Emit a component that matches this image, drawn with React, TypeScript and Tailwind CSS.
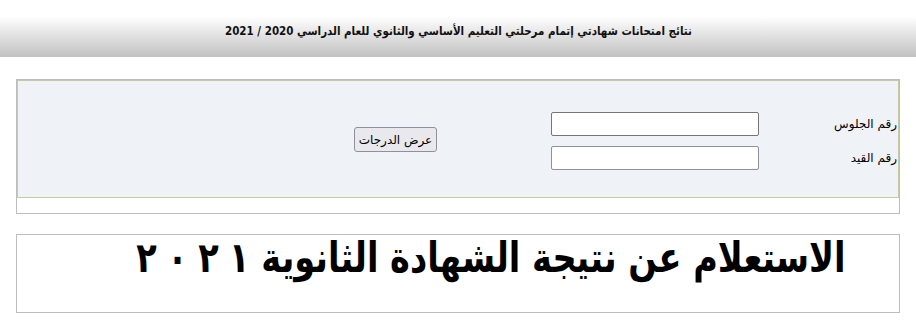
import React from "react"

const yearDigits = ["٢", "٠", "٢", "١"]

export default function App() {
  return (
    <div dir="rtl" className="min-h-[334px] w-[916px] bg-white font-['DejaVu_Sans',sans-serif] text-black">
      <header className="flex h-[57px] items-start justify-center bg-[linear-gradient(to_bottom,#ffffff_28%,#c1c1c1)] pt-[22px]">
        <h1 className="inline-block origin-center scale-x-[0.86] whitespace-nowrap text-[12px] font-bold leading-[18px] text-[#111]">
          نتائج امتحانات شهادتي إتمام مرحلتي التعليم الأساسي والثانوي للعام الدراسي 2020 / 2021
        </h1>
      </header>

      <div className="mr-[16px] mt-[22px] w-[884px] border border-[#bdbdbd]">
        <form className="flex h-[118px] border border-[#c6cba6] bg-[#eff2f7] pt-[31px]">
          <div className="flex w-[70px] shrink-0 flex-col whitespace-nowrap pr-[1px] text-[12px] leading-[16px]">
            <label className="flex h-[24px] items-center">رقم الجلوس</label>
            <label className="mt-[10px] flex h-[24px] items-center">رقم القيد</label>
          </div>
          <div className="mr-[69px] flex w-[208px] shrink-0 flex-col gap-[10px]">
            <input
              type="text"
              className="h-[24px] w-[208px] rounded-[2px] border border-[#767676] bg-white"
            />
            <input
              type="text"
              className="h-[24px] w-[208px] rounded-[2px] border border-[#8f8f9d] bg-white"
            />
          </div>
          <div className="mr-[114px] flex items-start pt-[15px]">
            <button
              type="button"
              className="h-[25px] w-[83px] whitespace-nowrap rounded-[3px] border border-[#8f8f9d] bg-[#e9e9ed] text-[12px] leading-none"
            >
              عرض الدرجات
            </button>
          </div>
        </form>
        <div className="h-[15px]" />
      </div>

      <div className="mr-[16px] mt-[20px] h-[79px] w-[884px] border border-[#bdbdbd] pr-[53px]">
        <p className="inline-block origin-right scale-x-[0.8] whitespace-nowrap text-[42px] font-bold leading-[46px]">
          الاستعلام عن نتيجة الشهادة الثانوية{" "}
          <span dir="ltr" className="inline-flex gap-[13px]">
            {yearDigits.map((d, i) => (
              <span key={i}>{d}</span>
            ))}
          </span>
        </p>
      </div>
    </div>
  )
}
